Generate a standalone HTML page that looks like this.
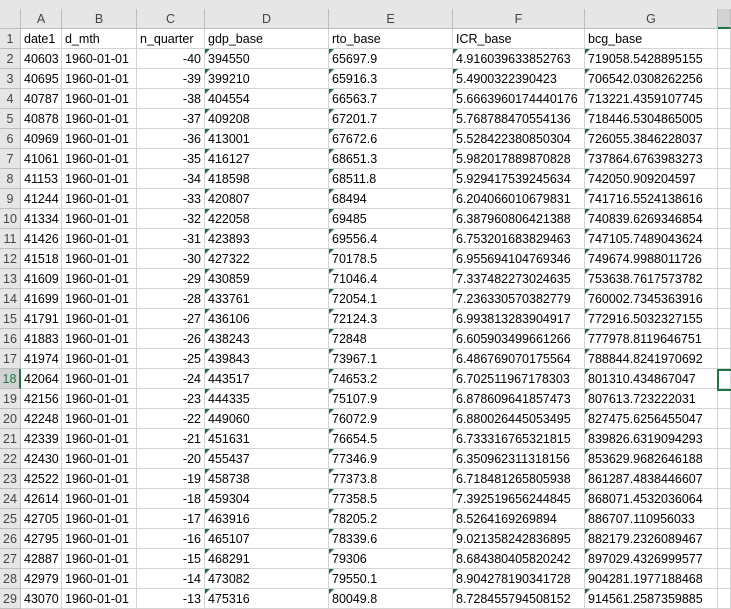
<!DOCTYPE html>
<html><head><meta charset="utf-8"><style>
*{box-sizing:border-box;margin:0;padding:0}
body{width:731px;height:605px;overflow:hidden;background:#fff;font-family:"Liberation Sans",sans-serif;font-size:12.5px;color:#000;position:relative}
.strip{position:absolute;left:0;top:0;width:731px;height:9px;background:#e6e6e6}
.grid{position:absolute;left:0;top:9px}
.r{display:flex;height:20px}
.r>div{height:20px;border-right:1px solid #d4d4d4;border-bottom:1px solid #d4d4d4;line-height:21px;padding:0 3px;white-space:nowrap;overflow:hidden;position:relative}
.r>div:nth-child(1){width:21px;background:#e6e6e6;color:#444;border-right-color:#bdbdbd;border-bottom-color:#bdbdbd;padding:0;text-align:center;font-size:12.5px}
.r>div:nth-child(2){width:41px;text-align:right}
.r>div:nth-child(3){width:75px}
.r>div:nth-child(4){width:68px;text-align:right}
.r>div:nth-child(5){width:124px}
.r>div:nth-child(6){width:124px}
.r>div:nth-child(7){width:132px}
.r>div:nth-child(8){width:133px}
.r>div:nth-child(9){width:13px}
.h>div{background:#e6e6e6;color:#444;text-align:center!important;border-right-color:#bdbdbd;border-bottom-color:#bdbdbd}
.h>div:nth-child(9){border-bottom:2px solid #217346;background:#d2d2d2}
.r:not(.h):not(.f)>div:nth-child(n+5):nth-child(-n+8)::before{content:"";position:absolute;left:0;top:0;border-top:5px solid #1e7145;border-right:5px solid transparent}
.s>div:nth-child(1){background:#d2d2d2;color:#217346;border-right:2px solid #217346}
.sel{position:absolute;left:717px;top:369px;width:20px;height:22px;border:2px solid #217346}
</style></head><body>
<div class="strip"></div>
<div class="grid">
<div class="r h"><div></div><div>A</div><div>B</div><div>C</div><div>D</div><div>E</div><div>F</div><div>G</div><div></div></div>
<div class="r f"><div>1</div><div style="text-align:left">date1</div><div>d_mth</div><div style="text-align:left">n_quarter</div><div>gdp_base</div><div>rto_base</div><div>ICR_base</div><div>bcg_base</div><div></div></div>
<div class="r"><div>2</div><div>40603</div><div>1960-01-01</div><div>-40</div><div>394550</div><div>65697.9</div><div>4.916039633852763</div><div>719058.5428895155</div><div></div></div>
<div class="r"><div>3</div><div>40695</div><div>1960-01-01</div><div>-39</div><div>399210</div><div>65916.3</div><div>5.4900322390423</div><div>706542.0308262256</div><div></div></div>
<div class="r"><div>4</div><div>40787</div><div>1960-01-01</div><div>-38</div><div>404554</div><div>66563.7</div><div>5.6663960174440176</div><div>713221.4359107745</div><div></div></div>
<div class="r"><div>5</div><div>40878</div><div>1960-01-01</div><div>-37</div><div>409208</div><div>67201.7</div><div>5.768788470554136</div><div>718446.5304865005</div><div></div></div>
<div class="r"><div>6</div><div>40969</div><div>1960-01-01</div><div>-36</div><div>413001</div><div>67672.6</div><div>5.528422380850304</div><div>726055.3846228037</div><div></div></div>
<div class="r"><div>7</div><div>41061</div><div>1960-01-01</div><div>-35</div><div>416127</div><div>68651.3</div><div>5.982017889870828</div><div>737864.6763983273</div><div></div></div>
<div class="r"><div>8</div><div>41153</div><div>1960-01-01</div><div>-34</div><div>418598</div><div>68511.8</div><div>5.929417539245634</div><div>742050.909204597</div><div></div></div>
<div class="r"><div>9</div><div>41244</div><div>1960-01-01</div><div>-33</div><div>420807</div><div>68494</div><div>6.204066010679831</div><div>741716.5524138616</div><div></div></div>
<div class="r"><div>10</div><div>41334</div><div>1960-01-01</div><div>-32</div><div>422058</div><div>69485</div><div>6.387960806421388</div><div>740839.6269346854</div><div></div></div>
<div class="r"><div>11</div><div>41426</div><div>1960-01-01</div><div>-31</div><div>423893</div><div>69556.4</div><div>6.753201683829463</div><div>747105.7489043624</div><div></div></div>
<div class="r"><div>12</div><div>41518</div><div>1960-01-01</div><div>-30</div><div>427322</div><div>70178.5</div><div>6.955694104769346</div><div>749674.9988011726</div><div></div></div>
<div class="r"><div>13</div><div>41609</div><div>1960-01-01</div><div>-29</div><div>430859</div><div>71046.4</div><div>7.337482273024635</div><div>753638.7617573782</div><div></div></div>
<div class="r"><div>14</div><div>41699</div><div>1960-01-01</div><div>-28</div><div>433761</div><div>72054.1</div><div>7.236330570382779</div><div>760002.7345363916</div><div></div></div>
<div class="r"><div>15</div><div>41791</div><div>1960-01-01</div><div>-27</div><div>436106</div><div>72124.3</div><div>6.993813283904917</div><div>772916.5032327155</div><div></div></div>
<div class="r"><div>16</div><div>41883</div><div>1960-01-01</div><div>-26</div><div>438243</div><div>72848</div><div>6.605903499661266</div><div>777978.8119646751</div><div></div></div>
<div class="r"><div>17</div><div>41974</div><div>1960-01-01</div><div>-25</div><div>439843</div><div>73967.1</div><div>6.486769070175564</div><div>788844.8241970692</div><div></div></div>
<div class="r s"><div>18</div><div>42064</div><div>1960-01-01</div><div>-24</div><div>443517</div><div>74653.2</div><div>6.702511967178303</div><div>801310.434867047</div><div></div></div>
<div class="r"><div>19</div><div>42156</div><div>1960-01-01</div><div>-23</div><div>444335</div><div>75107.9</div><div>6.878609641857473</div><div>807613.723222031</div><div></div></div>
<div class="r"><div>20</div><div>42248</div><div>1960-01-01</div><div>-22</div><div>449060</div><div>76072.9</div><div>6.880026445053495</div><div>827475.6256455047</div><div></div></div>
<div class="r"><div>21</div><div>42339</div><div>1960-01-01</div><div>-21</div><div>451631</div><div>76654.5</div><div>6.733316765321815</div><div>839826.6319094293</div><div></div></div>
<div class="r"><div>22</div><div>42430</div><div>1960-01-01</div><div>-20</div><div>455437</div><div>77346.9</div><div>6.350962311318156</div><div>853629.9682646188</div><div></div></div>
<div class="r"><div>23</div><div>42522</div><div>1960-01-01</div><div>-19</div><div>458738</div><div>77373.8</div><div>6.718481265805938</div><div>861287.4838446607</div><div></div></div>
<div class="r"><div>24</div><div>42614</div><div>1960-01-01</div><div>-18</div><div>459304</div><div>77358.5</div><div>7.392519656244845</div><div>868071.4532036064</div><div></div></div>
<div class="r"><div>25</div><div>42705</div><div>1960-01-01</div><div>-17</div><div>463916</div><div>78205.2</div><div>8.5264169269894</div><div>886707.110956033</div><div></div></div>
<div class="r"><div>26</div><div>42795</div><div>1960-01-01</div><div>-16</div><div>465107</div><div>78339.6</div><div>9.021358242836895</div><div>882179.2326089467</div><div></div></div>
<div class="r"><div>27</div><div>42887</div><div>1960-01-01</div><div>-15</div><div>468291</div><div>79306</div><div>8.684380405820242</div><div>897029.4326999577</div><div></div></div>
<div class="r"><div>28</div><div>42979</div><div>1960-01-01</div><div>-14</div><div>473082</div><div>79550.1</div><div>8.904278190341728</div><div>904281.1977188468</div><div></div></div>
<div class="r"><div>29</div><div>43070</div><div>1960-01-01</div><div>-13</div><div>475316</div><div>80049.8</div><div>8.728455794508152</div><div>914561.2587359885</div><div></div></div>
</div>
<div class="sel"></div>
</body></html>
